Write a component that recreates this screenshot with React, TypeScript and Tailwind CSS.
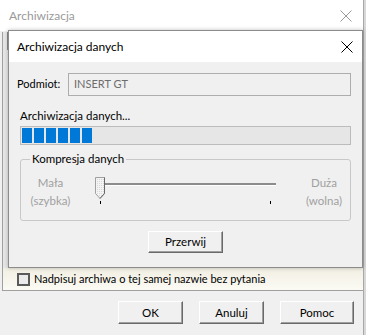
import React from 'react';

const font = "font-['Lato','Liberation_Sans',sans-serif]";

const CloseIcon: React.FC<{ color: string }> = ({ color }) => (
  <svg width="12" height="12" viewBox="0 0 12 12">
    <path d="M0.5 0.5 L11.5 11.5 M11.5 0.5 L0.5 11.5" stroke={color} strokeWidth="1" fill="none" />
  </svg>
);

const ClassicButton: React.FC<{ label: string; className?: string }> = ({ label, className = '' }) => (
  <button
    className={`flex items-center justify-center bg-[#f0f0f0] border border-t-white border-l-white border-r-[#696969] border-b-[#696969] shadow-[inset_-1px_-1px_0_#a0a0a0] text-[11.5px] text-black ${className}`}
  >
    {label}
  </button>
);

const SliderThumb: React.FC = () => (
  <svg width="11" height="23" viewBox="0 0 11 23">
    <defs>
      <pattern id="dots" width="2" height="2" patternUnits="userSpaceOnUse">
        <rect width="2" height="2" fill="#f4f4f4" />
        <rect width="1" height="1" fill="#d6d6d6" />
      </pattern>
    </defs>
    <path d="M0.5 0.5 H9.5 V16.5 L5 21.5 L0.5 16.5 Z" fill="url(#dots)" stroke="#a0a0a0" />
    <path d="M9.5 0.5 V16.5 L5 21.5" stroke="#696969" fill="none" />
  </svg>
);

const App: React.FC = () => {
  return (
    <div className={`relative w-[366px] h-[335px] overflow-hidden bg-[#f0f0f0] ${font}`}>
      {/* outer window */}
      <div className="flex w-full h-full">
        <div className="flex flex-col w-[363px] h-full">
          <div className="flex items-center justify-between h-[31px] bg-white pl-[9px] pr-[11px]">
            <span className="text-[12px] text-[#9a9a9a]">Archiwizacja</span>
            <CloseIcon color="#9a9a9a" />
          </div>
          <div className="flex-1 flex flex-col">
            <div className="relative ml-[2px] mt-[1px] h-[259px] border-l border-b border-[#a0a0a0]">
              <div className="absolute left-[4px] top-0 w-[1px] h-[18px] bg-[#8a8a8a]" />
              <div className="h-[236px] bg-[#e6e6e6]" />
              <div className="flex items-center gap-[4px] h-[22px] pl-[14px] bg-gradient-to-b from-[#f2efe3] to-[#fbfaf4]">
                <div className="w-[13px] h-[13px] border-2 border-[#5a5a5a] bg-[#ebebeb]" />
                <span className="text-[11px] text-black">Nadpisuj archiwa o tej samej nazwie bez pytania</span>
              </div>
            </div>
            <div className="flex justify-end gap-[16px] pt-[10px] pr-[9px]">
              <ClassicButton label="OK" className="w-[65px] h-[23px]" />
              <ClassicButton label="Anuluj" className="w-[65px] h-[23px]" />
              <ClassicButton label="Pomoc" className="w-[74px] h-[23px]" />
            </div>
          </div>
        </div>
        <div className="w-[3px] h-full border-l border-[#a8a8a8] bg-[#d8d8d8]" />
      </div>

      {/* inner dialog */}
      <div className="absolute left-[8px] top-[30px] w-[355px] h-[238px] flex flex-col border border-[#8c8c8c] bg-[#f0f0f0] shadow-[0_0_4px_rgba(0,0,0,0.25)]">
        <div className="flex items-center justify-between h-[31px] bg-white pl-[8px] pr-[9px]">
          <span className="text-[12px] text-black">Archiwizacja danych</span>
          <CloseIcon color="#000" />
        </div>
        <div className="flex flex-col px-[11px] pt-[11px]">
          <div className="flex items-center -ml-[3px]">
            <span className="w-[51px] text-[11px] text-black">Podmiot:</span>
            <div className="flex-1 h-[23px] border border-[#adadad] bg-[#f0f0f0] px-[5px] flex items-center text-[11px] text-[#6d6d6d]">
              INSERT GT
            </div>
          </div>
          <span className="mt-[12px] text-[11.5px] leading-[16px] text-black">Archiwizacja danych...</span>
          <div className="mt-[2px] h-[19px] border border-[#bcbcbc] bg-[#e6e6e6] flex items-center gap-[2px] px-[1px]">
            {[0, 1, 2, 3, 4, 5].map(i => (
              <div key={i} className="w-[10px] h-[15px] bg-[#0078d7]" />
            ))}
          </div>
          <div className="relative mt-[14px] h-[62px] border border-[#c8c8c8] rounded-[3px]">
            <span className="absolute left-[9px] -top-[9px] px-[2px] bg-[#f0f0f0] text-[11.5px] leading-[16px] text-black">
              Kompresja danych
            </span>
            <div className="flex items-start pt-[14px] pl-[8px]">
              <div className="flex flex-col items-center w-[43px] text-[11.5px] leading-[18px] text-[#a0a0a0]">
                <span>Mała</span>
                <span>(szybka)</span>
              </div>
              <div className="relative ml-[23px] w-[182px] h-[36px]">
                <div className="absolute left-[5px] top-[9px] w-[176px] h-[3px] border-t-2 border-[#8c8c8c] bg-white" />
                <div className="absolute left-0 top-[3px]">
                  <SliderThumb />
                </div>
                <div className="absolute left-[5px] top-[27px] w-[1px] h-[3px] bg-black" />
                <div className="absolute left-[175px] top-[27px] w-[1px] h-[3px] bg-black" />
              </div>
              <div className="flex flex-col items-center ml-[27px] w-[40px] text-[11.5px] leading-[18px] text-[#a0a0a0]">
                <span>Duża</span>
                <span>(wolna)</span>
              </div>
            </div>
          </div>
          <div className="flex justify-center mt-[10px]">
            <ClassicButton label="Przerwij" className="w-[75px] h-[22px]" />
          </div>
        </div>
      </div>
    </div>
  );
};

export default App;
